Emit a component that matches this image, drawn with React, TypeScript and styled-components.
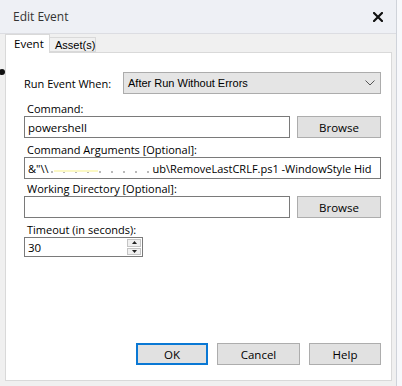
import React from 'react';
import styled, { createGlobalStyle } from 'styled-components';

const GlobalStyle = createGlobalStyle`
  html, body {
    margin: 0;
    padding: 0;
    background: #f7f8fb;
  }
  body {
    font-family: "Open Sans", "Noto Sans", sans-serif;
    font-size: 11px;
    color: #000;
  }
`

const Window = styled.div`
  position: relative;
  width: 396px;
  height: 386px;
  border-right: 1px solid #cfd3da;
  display: flex;
  flex-direction: column;
  background: #f0f0f0;
  overflow: hidden;
`

const TitleBar = styled.div`
  height: 34px;
  flex: none;
  display: flex;
  align-items: center;
  justify-content: space-between;
  padding: 0 13px 0 13px;
  background: #eef0f5;
  border-bottom: 1px solid #dcdde2;
  box-sizing: border-box;
`

const Title = styled.span`
  font-size: 12px;
  color: #333;
`

const Close = styled.span`
  display: flex;
  width: 10px;
  height: 10px;
`

const TabStrip = styled.div`
  height: 18px;
  flex: none;
  display: flex;
  align-items: flex-end;
  padding-left: 5px;
  position: relative;
  z-index: 1;
`

const Tab = styled.div<{ $active?: boolean }>`
  box-sizing: border-box;
  height: ${p => (p.$active ? '19px' : '15px')};
  margin-bottom: ${p => (p.$active ? '-1px' : '0')};
  padding: ${p => (p.$active ? '1px 0 0 8px' : '0 0 0 5px')};
  background: ${p => (p.$active ? '#fff' : '#f0f0f0')};
  border: 1px solid #d9d9d9;
  border-bottom: ${p => (p.$active ? 'none' : '1px solid #d9d9d9')};
  border-left: ${p => (p.$active ? '1px solid #d9d9d9' : 'none')};
  display: flex;
  align-items: ${p => (p.$active ? 'flex-start' : 'center')};
  font-family: ${p => (p.$active ? '"Open Sans", sans-serif' : '"Liberation Sans", Arial, sans-serif')};
  font-size: ${p => (p.$active ? '11.5px' : '11px')};
  width: ${p => (p.$active ? '45px' : '46px')};
`

const Panel = styled.div`
  flex: 1;
  margin: 0 4px 5px 5px;
  background: #fff;
  border: 1px solid #d9d9d9;
  display: flex;
  flex-direction: column;
  padding: 19px 10px 15px 18px;
`

const Row = styled.div<{ $mt?: number }>`
  display: flex;
  align-items: center;
  gap: 7px;
  margin-top: ${p => p.$mt ?? 0}px;
`

const Label = styled.div<{ $mt?: number; $w?: number }>`
  height: 15px;
  line-height: 15px;
  white-space: nowrap;
  padding-left: ${p => (p.$w ? 0 : 3)}px;
  margin-top: ${p => p.$mt ?? 0}px;
  width: ${p => (p.$w ? `${p.$w}px` : 'auto')};
  flex: none;
`

const Select = styled.div`
  flex: 1;
  height: 22px;
  box-sizing: border-box;
  background: #e5e5e5;
  border: 1px solid #acacac;
  display: flex;
  align-items: center;
  justify-content: space-between;
  padding: 0 5px 0 4px;
  font-family: "Liberation Sans", Arial, sans-serif;
  font-size: 11px;
`

const TextBox = styled.div<{ $w?: number; $h?: number }>`
  box-sizing: border-box;
  height: ${p => p.$h ?? 22}px;
  width: ${p => (p.$w ? `${p.$w}px` : '100%')};
  border: 1px solid #7a7a7a;
  background: #fff;
  display: flex;
  align-items: center;
  padding-left: 3px;
  font-size: 11.5px;
  white-space: nowrap;
  overflow: hidden;
  flex: none;
  position: relative;
`

const ArgsText = styled.span`
  font-size: 11px;
  display: flex;
  align-items: center;
`

const Redacted = styled.span`
  display: inline-block;
  width: 104px;
  height: 12px;
  flex: none;
  background:
    linear-gradient(#fbf8c4, #fbf8c4) 6px 8px / 44px 2px no-repeat,
    radial-gradient(circle, #b9b9b9 0.8px, transparent 1.2px) 58px 8px / 12px 4px repeat-x;
`

const Button = styled.button<{ $w: number; $default?: boolean }>`
  width: ${p => p.$w}px;
  height: 22px;
  box-sizing: border-box;
  background: #e1e1e1;
  border: ${p => (p.$default ? '2px solid #0a78d4' : '1px solid #adadad')};
  font-family: "Open Sans", sans-serif;
  font-size: 11.5px;
  color: #000;
  padding: 0;
  flex: none;
`

const Spin = styled.div`
  position: absolute;
  right: 1px;
  top: 1px;
  bottom: 1px;
  width: 14px;
  display: flex;
  flex-direction: column;
  gap: 1px;
`

const SpinButton = styled.div`
  flex: 1;
  border: 1px solid #c4c4c4;
  background: #f0f0f0;
  display: flex;
  align-items: center;
  justify-content: center;
`

const Buttons = styled.div`
  margin-top: auto;
  display: flex;
  justify-content: flex-end;
  gap: 9px;
`

const Dot = styled.div`
  position: absolute;
  left: -1px;
  top: 69px;
  width: 6px;
  height: 6px;
  border-radius: 50%;
  background: #111;
`

const Arrow = ({ up }: { up?: boolean }) => (
  <svg width="5" height="3" viewBox="0 0 5 3">
    <path d={up ? 'M0 3 L2.5 0 L5 3 Z' : 'M0 0 L2.5 3 L5 0 Z'} fill="#222" />
  </svg>
)

export default function App() {
  return (
    <>
      <GlobalStyle />
      <Window>
        <TitleBar>
          <Title>Edit Event</Title>
          <Close>
            <svg width="10" height="10" viewBox="0 0 10 10">
              <path d="M1 1 L9 9 M9 1 L1 9" stroke="#111" strokeWidth="2.2" strokeLinecap="square" />
            </svg>
          </Close>
        </TitleBar>
        <TabStrip>
          <Tab $active>Event</Tab>
          <Tab>Asset(s)</Tab>
        </TabStrip>
        <Panel>
          <Row>
            <Label $w={92}>Run Event When:</Label>
            <Select>
              <span>After Run Without Errors</span>
              <svg width="10" height="6" viewBox="0 0 10 6">
                <path d="M0.5 0.5 L5 5 L9.5 0.5" stroke="#555" strokeWidth="1" fill="none" />
              </svg>
            </Select>
          </Row>

          <Label $mt={7}>Command:</Label>
          <Row>
            <TextBox $w={266}>powershell</TextBox>
            <Button $w={84}>Browse</Button>
          </Row>

          <Label $mt={4}>Command Arguments [Optional]:</Label>
          <TextBox>
            <ArgsText>
              &amp;"\\<Redacted />ub\RemoveLastCRLF.ps1 -WindowStyle Hid
            </ArgsText>
          </TextBox>

          <Label $mt={2}>Working Directory [Optional]:</Label>
          <Row>
            <TextBox $w={266} />
            <Button $w={84}>Browse</Button>
          </Row>

          <Label $mt={4}>Timeout (in seconds):</Label>
          <TextBox $w={119} $h={20}>
            30
            <Spin>
              <SpinButton><Arrow up /></SpinButton>
              <SpinButton><Arrow /></SpinButton>
            </Spin>
          </TextBox>

          <Buttons>
            <Button $w={72} $default>OK</Button>
            <Button $w={83}>Cancel</Button>
            <Button $w={72}>Help</Button>
          </Buttons>
        </Panel>
        <Dot />
      </Window>
    </>
  );
}
